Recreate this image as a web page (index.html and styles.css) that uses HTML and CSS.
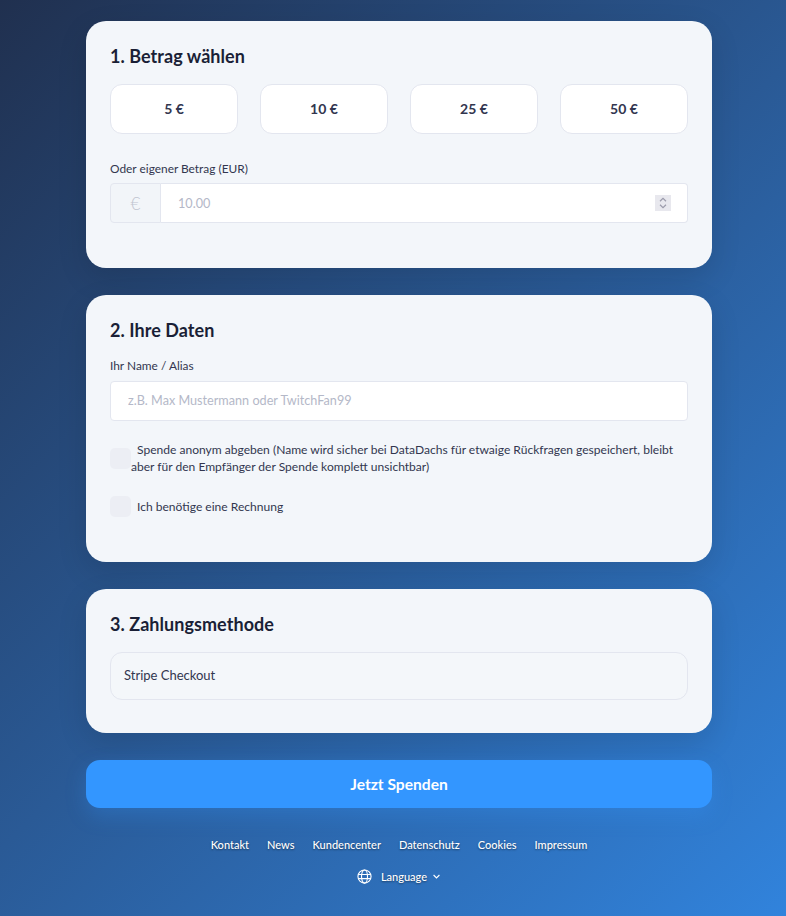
FILE: index.html
```html
<!DOCTYPE html>
<html lang="de">
<head>
<meta charset="utf-8">
<title>Spenden</title>
<link rel="stylesheet" href="styles.css">
</head>
<body>
<main class="page">
  <section class="card card-amount">
    <h2>1. Betrag wählen</h2>
    <div class="amounts">
      <button class="amount">5 €</button>
      <button class="amount">10 €</button>
      <button class="amount">25 €</button>
      <button class="amount">50 €</button>
    </div>
    <label class="label label-amount" for="betrag">Oder eigener Betrag (EUR)</label>
    <div class="input-group">
      <span class="prefix">€</span>
      <input id="betrag" class="field field-number" type="number" placeholder="10.00">
      <svg class="spin" viewBox="0 0 16 16" fill="none" stroke="#9b9bab" stroke-width="1.2"><rect width="16" height="16" fill="#e8e8ee" stroke="none"/><path d="M5 6.2 8 3.4l3 2.8M5 9.8l3 2.8 3-2.8"/></svg>
    </div>
  </section>
  <section class="card card-data">
    <h2>2. Ihre Daten</h2>
    <label class="label label-name" for="name">Ihr Name / Alias</label>
    <input id="name" class="field field-text" type="text" placeholder="z.B. Max Mustermann oder TwitchFan99">
    <label class="check check-first">
      <input type="checkbox" class="box">
      <span>Spende anonym abgeben (Name wird sicher bei DataDachs für etwaige Rückfragen gespeichert, bleibt aber für den Empfänger der Spende komplett unsichtbar)</span>
    </label>
    <label class="check check-second">
      <input type="checkbox" class="box">
      <span>Ich benötige eine Rechnung</span>
    </label>
  </section>
  <section class="card card-pay">
    <h2>3. Zahlungsmethode</h2>
    <div class="method">Stripe Checkout</div>
  </section>
  <button class="submit">Jetzt Spenden</button>
  <footer class="footer">
    <nav class="links">
      <a href="#">Kontakt</a>
      <a href="#">News</a>
      <a href="#">Kundencenter</a>
      <a href="#">Datenschutz</a>
      <a href="#">Cookies</a>
      <a href="#">Impressum</a>
    </nav>
    <div class="lang">
      <svg class="globe" viewBox="0 0 16 16" fill="none" stroke="currentColor" stroke-width="1.2"><circle cx="8" cy="8" r="7"/><ellipse cx="8" cy="8" rx="3.2" ry="7"/><path d="M1.2 5.8h13.6M1.2 10.2h13.6"/></svg>
      <span>Language</span>
      <svg class="chev" viewBox="0 0 10 6" fill="none" stroke="currentColor" stroke-width="1.4"><path d="M1.5 1.2 5 4.6l3.5-3.4"/></svg>
    </div>
  </footer>
</main>
</body>
</html>
```
FILE: styles.css
```css
* { box-sizing: border-box; }
html, body { margin: 0; height: 100%; }
body {
  font-family: Lato, "Noto Sans", sans-serif;
  color: #1a1f36;
  background: linear-gradient(135deg, #20304f 0%, #2a5a96 50%, #3183dc 100%);
  min-height: 916px;
  overflow: hidden;
}
.page {
  width: 626px;
  margin-left: 86px;
  padding-top: 21px;
  display: flex;
  flex-direction: column;
  gap: 27px;
}
.card {
  background: #f3f6fa;
  border-radius: 20px;
  padding: 23px 24px 24px;
  box-shadow: 0 10px 30px rgba(0, 0, 0, 0.12);
}
.card-amount { height: 247px; }
.card-data { height: 267px; }
.card-pay { height: 144px; }
h2 {
  margin: 0;
  font-size: 18px;
  line-height: 24px;
  font-weight: 700;
  color: #1a1f36;
  letter-spacing: 0.05px;
}
.amounts {
  display: grid;
  grid-template-columns: repeat(4, 1fr);
  gap: 22px;
  margin-top: 16px;
}
.amount {
  height: 50px;
  background: #fff;
  border: 1px solid #e3e6ef;
  border-radius: 12px;
  padding: 0 6px 2px;
  font: 700 14px Lato, sans-serif;
  color: #32364f;
}
.label {
  display: block;
  font-size: 11.9px;
  line-height: 16px;
  color: #32364f;
}
.label-amount { margin-top: 27px; margin-bottom: 6px; }
.label-name { margin-top: 16px; margin-bottom: 7px; }
.input-group { position: relative; display: flex; height: 40px; }
.prefix {
  width: 51px;
  display: flex;
  align-items: center;
  justify-content: center;
  background: #f2f5f9;
  border: 1px solid #e3e6ef;
  border-radius: 4px 0 0 4px;
  color: #c0c4d0;
  font-size: 17px;
  font-weight: 300;
}
.field {
  height: 40px;
  background: #fff;
  border: 1px solid #e3e6ef;
  padding: 0 17px 1px;
  font: 12.65px Lato, sans-serif;
  outline: none;
}
.field::placeholder { color: #b4b8c8; opacity: 1; }
.field-number {
  flex: 1;
  min-width: 0;
  padding-bottom: 0;
  border-left: 0;
  border-radius: 0 4px 4px 0;
  appearance: textfield;
}
.field-number::-webkit-inner-spin-button { appearance: none; }
.spin {
  position: absolute;
  right: 17px;
  top: 12px;
  width: 16px;
  height: 16px;
}
.field-text { width: 100%; border-radius: 4px; }
.check {
  display: flex;
  align-items: center;
  font-size: 12.05px;
  line-height: 17px;
  color: #32364f;
}
.check span { text-indent: 6px; }
.check-first { margin-top: 20px; }
.check-second { margin-top: 21px; }
.box {
  appearance: none;
  flex: none;
  width: 21px;
  height: 21px;
  margin: 0;
  background: #eceef4;
  border-radius: 5px;
}
.method {
  height: 48px;
  margin-top: 16px;
  padding: 0 0 3px 13px;
  display: flex;
  align-items: center;
  background: #f4f7fa;
  border: 1px solid #e3e6ef;
  border-radius: 12px;
  font-size: 13px;
  color: #32364f;
}
.submit {
  height: 48px;
  border: 0;
  border-radius: 14px;
  background: #3396ff;
  color: #fff;
  padding-bottom: 2px;
  font: 700 15.6px Lato, sans-serif;
  box-shadow: 0 8px 20px rgba(51, 150, 255, 0.25);
}
.footer {
  display: flex;
  flex-direction: column;
  align-items: center;
  gap: 18px;
  color: #fff;
  font-size: 11px;
  font-weight: 500;
  text-shadow: 0 1px 2px rgba(0, 0, 0, 0.45);
}
.links { display: flex; gap: 18px; margin-top: 3px; }
.links a { color: #fff; text-decoration: none; }
.lang { display: flex; align-items: center; gap: 9px; }
.globe { width: 15px; height: 15px; }
.chev { width: 9px; height: 5px; margin-left: -4px; }
```
